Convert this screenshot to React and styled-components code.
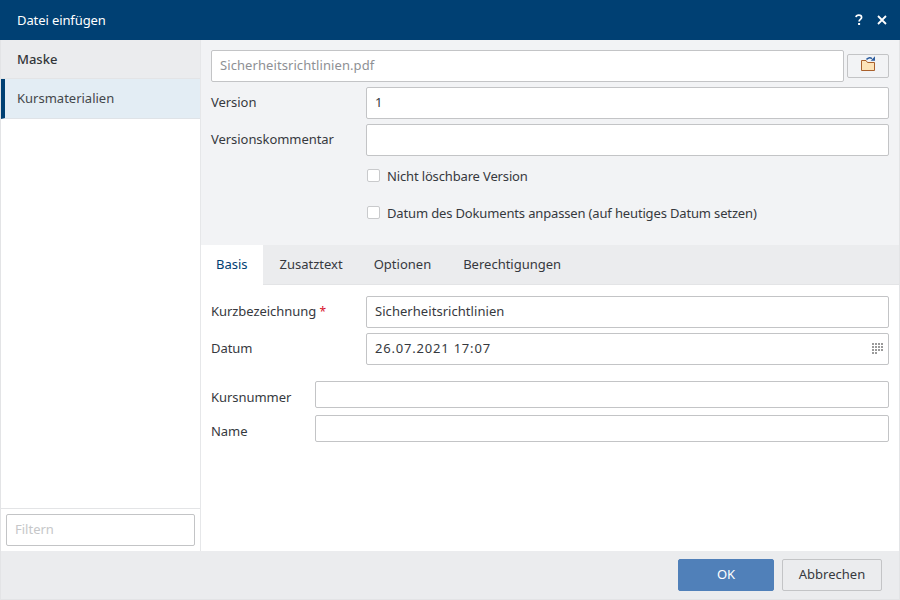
import React from "react";
import styled, { createGlobalStyle } from "styled-components";

const Global = createGlobalStyle`
  html, body { margin: 0; padding: 0; background: #fff; }
  * { box-sizing: border-box; }
  body { font-family: "Noto Sans", "Open Sans", sans-serif; font-size: 13px; color: #36393e; }
`;
const Dialog = styled.div`
  width: 900px; height: 600px; display: flex; flex-direction: column; overflow: hidden;
`;
const TitleBar = styled.header`
  height: 40px; flex: none; background: #004073; color: #fff; display: flex; align-items: center;
  padding: 0 13px 0 17px; justify-content: space-between;
`;
const Title = styled.div`font-size: 13px; letter-spacing: -0.1px;`;
const TitleActions = styled.div`display: flex; align-items: center; gap: 13px;`;
const TitleIcon = styled.svg`width: 10px; height: 12px; display: block;`;
const Body = styled.div`
  flex: 1; min-height: 0; display: flex; border-left: 1px solid #e3e4e6; border-right: 1px solid #e3e4e6;
`;
const Sidebar = styled.aside`
  width: 200px; flex: none; background: #fff; border-right: 1px solid #e6e7e9; display: flex; flex-direction: column;
`;
const SideHead = styled.div`
  height: 39px; background: #ebecee; border-bottom: 1px solid #e3e4e6; padding-left: 16px;
  display: flex; align-items: center; font-weight: 500; color: #33363a;
`;
const SideItem = styled.div`
  height: 40px; background: #e3edf4; border-left: 4px solid #004073; border-bottom: 1px solid #dfe3e7;
  padding: 0 0 2px 12px; display: flex; align-items: center; color: #44474b;
`;
const SideSpacer = styled.div`flex: 1;`;
const FilterWrap = styled.div`
  height: 43px; border-top: 1px solid #e3e4e6; padding: 5px 5px 0;
`;
const FilterBox = styled.div`
  height: 32px; border: 1px solid #c3c4c6; border-radius: 2px; background: #fff; color: #c6c7c9;
  padding: 0 0 2px 8px; display: flex; align-items: center;
`;
const Main = styled.main`flex: 1; min-width: 0; display: flex; flex-direction: column;`;
const TopPanel = styled.section`
  height: 205px; flex: none; background: #f2f3f5; padding: 10px 10px 0;
`;
const FileRow = styled.div`display: flex; gap: 3px; align-items: center; margin-bottom: 5px;`;
const Field = styled.div`
  height: ${p => p.$h || 32}px; flex: 1; min-width: 0; background: #fff; border: 1px solid #c3c4c6; border-radius: 2px;
  padding: 0 8px 2px; display: flex; align-items: center; justify-content: space-between;
  color: ${p => (p.$muted ? "#8e9094" : "#36393e")}; white-space: nowrap;
  letter-spacing: ${p => p.$ls || 0}px;
`;
const IconButton = styled.div`
  width: 42px; height: 24px; flex: none; border: 1px solid #c3c4c6; border-radius: 2px; background: #f2f3f5;
  display: flex; align-items: center; justify-content: center;
`;
const Row = styled.div`
  display: flex; align-items: center; margin-bottom: ${p => p.$mb ?? 5}px;
`;
const Label = styled.label`
  width: ${p => p.$w || 155}px; flex: none; color: #36393e; white-space: nowrap;
  padding: ${p => (p.$low ? "4px 0 0" : "0 0 2px")}; letter-spacing: -0.05px;
`;
const Req = styled.span`color: #d8112c; font-size: 12px;`;
const CheckRow = styled.div`
  display: flex; align-items: center; gap: 7px; margin-left: 156px; height: 13px; color: #36393e;
  white-space: nowrap; margin-top: ${p => p.$mt}px; letter-spacing: -0.15px;
`;
const Box = styled.span`
  width: 13px; height: 13px; flex: none; background: #fff; border: 1px solid #c9cacc; border-radius: 2px;
`;
const TabBar = styled.nav`
  height: 40px; flex: none; background: #ebecee; border-bottom: 1px solid #e3e4e6; display: flex;
`;
const Tab = styled.div`
  height: 40px; padding: 0 ${p => p.$right}px 2px ${p => p.$left}px; display: flex; align-items: center;
  background: ${p => (p.$active ? "#fff" : "transparent")}; color: ${p => (p.$active ? "#004073" : "#36393e")};
  white-space: nowrap;
`;
const TabContent = styled.section`flex: 1; min-height: 0; background: #fff; padding: 11px 10px 0;`;
const Footer = styled.footer`
  height: 49px; flex: none; background: #ebecee; border: 1px solid #e3e4e6; border-top: none; display: flex; align-items: flex-start;
  justify-content: flex-end; gap: 8px; padding: 8px 17px 0 0;
`;
const Button = styled.div`
  height: 32px; width: ${p => p.$w}px; padding-bottom: 2px; display: flex; align-items: center; justify-content: center; border-radius: 2px;
  background: ${p => (p.$primary ? "#5080b9" : "#ebecee")}; color: ${p => (p.$primary ? "#fff" : "#36393e")};
  border: 1px solid ${p => (p.$primary ? "#5080b9" : "#c3c4c6")};
`;
const GridSvg = styled.svg`width: 12px; height: 12px; flex: none; margin: 2px -4px 0 0;`;

const FolderIcon = () => (
  <svg width="16" height="20" viewBox="0 0 16 20">
    <path d="M1.5 14.5V4.5h4.5l1.5 2h7v8z" fill="#fde3b8" stroke="#a9602c" />
    <path d="M6.5 3.5C7.5 1.8 10 1.3 12 2.6" fill="none" stroke="#2d5d9e" strokeWidth="1.5" />
    <path d="M10.7 4.7H15V.2z" fill="#2d5d9e" />
  </svg>
);
const cells = [0, 1, 2, 3].flatMap(r => [0, 1, 2, 3].map(c => ({ r, c }))).filter(({ r, c }) => r < 3 || c < 2);
const GridIcon = () => (
  <GridSvg viewBox="0 0 12 12" fill="#9a9a9a">
    {cells.map(({ r, c }) => <rect key={`${r}-${c}`} x={c * 3} y={r * 3} width="2" height="2" />)}
  </GridSvg>
);

export default function App() {
  return (
    <Dialog>
      <Global />
      <TitleBar>
        <Title>Datei einfügen</Title>
        <TitleActions>
          <TitleIcon viewBox="0 0 10 12">
            <path d="M2 3.2C2.2 1.8 3.4 1.2 4.8 1.2c1.6 0 2.8.9 2.8 2.3 0 1.9-2.5 2-2.5 4" fill="none" stroke="#fff" strokeWidth="1.7" />
            <rect x="4.1" y="9" width="2" height="2" fill="#fff" />
          </TitleIcon>
          <TitleIcon viewBox="0 0 10 12">
            <path d="M1 2l8 8M9 2l-8 8" fill="none" stroke="#fff" strokeWidth="1.8" />
          </TitleIcon>
        </TitleActions>
      </TitleBar>
      <Body>
        <Sidebar>
          <SideHead>Maske</SideHead>
          <SideItem>Kursmaterialien</SideItem>
          <SideSpacer />
          <FilterWrap><FilterBox>Filtern</FilterBox></FilterWrap>
        </Sidebar>
        <Main>
          <TopPanel>
            <FileRow>
              <Field $muted $ls={0.08}>Sicherheitsrichtlinien.pdf</Field>
              <IconButton><FolderIcon /></IconButton>
            </FileRow>
            <Row><Label>Version</Label><Field>1</Field></Row>
            <Row><Label>Versionskommentar</Label><Field /></Row>
            <CheckRow $mt={13}><Box />Nicht löschbare Version</CheckRow>
            <CheckRow $mt={24}><Box />Datum des Dokuments anpassen (auf heutiges Datum setzen)</CheckRow>
          </TopPanel>
          <TabBar>
            <Tab $active $left={15} $right={15}>Basis</Tab>
            <Tab $left={17} $right={16}>Zusatztext</Tab>
            <Tab $left={15} $right={16}>Optionen</Tab>
            <Tab $left={16} $right={16}>Berechtigungen</Tab>
          </TabBar>
          <TabContent>
            <Row><Label>Kurzbezeichnung <Req>*</Req></Label><Field $ls={0.05}>Sicherheitsrichtlinien</Field></Row>
            <Row $mb={16}><Label>Datum</Label><Field $ls={0.8}>26.07.2021 17:07<GridIcon /></Field></Row>
            <Row $mb={7}><Label $w={104} $low>Kursnummer</Label><Field $h={27} /></Row>
            <Row><Label $w={104} $low>Name</Label><Field $h={27} /></Row>
          </TabContent>
        </Main>
      </Body>
      <Footer>
        <Button $primary $w={96}>OK</Button>
        <Button $w={100}>Abbrechen</Button>
      </Footer>
    </Dialog>
  );
}
